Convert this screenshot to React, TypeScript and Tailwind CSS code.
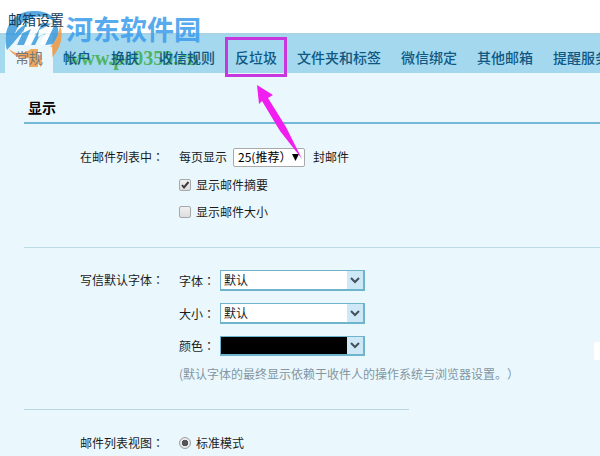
import type { ReactNode } from "react";

const tabs = ["常规", "帐户", "换肤", "收信规则", "反垃圾", "文件夹和标签", "微信绑定", "其他邮箱", "提醒服务"];

function SiteLogo() {
  return (
    <div className="pointer-events-none absolute top-2 left-1 z-10 flex opacity-85" aria-hidden="true">
      <svg width="62" height="62" viewBox="0 0 62 62">
        <path d="M3 42C-3 22 9 3 29 3C43 2 52 9 55 18C48 10 40 7 31 9C17 11 9 23 10 34Z" fill="#3d9bdc" />
        <path d="M5 38C8 28 14 20 22 16L35 12L23 37H13L20 22L10 34Z" fill="#3d9bdc" />
        <path d="M27 37L38 15L52 16C56 22 55 30 50 36L41 37L48 21L35 29L31 37Z" fill="#3d9bdc" />
        <path d="M22 16L33 11H38L26 37H20L27 21L19 25Z" fill="#ffffff" />
        <path d="M35 22L47 16H51L41 37H35L42 25L34 29Z" fill="#ffffff" />
        <path d="M56 18C61 29 55 49 36 59L35 48C47 41 54 31 56 18Z" fill="#f19a45" />
        <path d="M5 41C12 47 20 46 27 41H34V59H25V50C17 51 9 48 5 41Z" fill="#f19a45" />
        <path d="M37 39H48L49 62H38Z" fill="#eaf8fe" />
      </svg>
      <div className="whitespace-nowrap">
        <div className="text-[27px] leading-[42px] font-bold text-[#3c9cec]">河东软件园</div>
        <div className="font-['Liberation_Serif',serif] text-xl leading-4 font-bold text-[#3fae4c]">www.pc0359.cn</div>
      </div>
    </div>
  );
}

function Colon() {
  return <span className="font-['Noto_Sans_CJK_TC',sans-serif]">：</span>;
}

function Setting({ label, children }: { label: string; children: ReactNode }) {
  return (
    <div className="flex">
      <div className="w-[155px] shrink-0 pl-14 leading-5">{label}<Colon /></div>
      <div className="min-w-0 flex-1">{children}</div>
    </div>
  );
}

function FontSelect({ id, label, black = false }: { id: string; label: string; black?: boolean }) {
  return (
    <div className="flex items-center">
      <label htmlFor={id} className="w-[41px] whitespace-nowrap">{label}<Colon /></label>
      <div className="relative">
        <select
          id={id}
          className={
            black
              ? "block h-5 w-[145px] appearance-none border border-r-2 border-b-2 border-[#6eb5cc] bg-black px-1 text-black"
              : "block h-[21px] w-[145px] appearance-none border border-r-2 border-b-2 border-[#6eb5cc] bg-white px-[3px] leading-4"
          }
        >
          <option>{black ? "" : "默认"}</option>
        </select>
        <span className="pointer-events-none absolute top-px right-0.5 bottom-0.5 flex w-4 items-center justify-center bg-[#cfe8f8]">
          <svg width="10" height="7" viewBox="0 0 10 7" fill="none" stroke="#43515e" strokeWidth="2">
            <path d="M1 1L5 5L9 1" />
          </svg>
        </span>
      </div>
    </div>
  );
}

function Tick({ label, checked = false }: { label: string; checked?: boolean }) {
  return (
    <label className="flex h-5 items-center gap-[5px]">
      <span className="relative flex">
        <input
          type="checkbox"
          defaultChecked={checked}
          className="peer size-3 appearance-none rounded-xs border border-[#a5a9ab] bg-linear-to-b from-[#f0f0f0] to-[#dddddd]"
        />
        <svg className="pointer-events-none absolute inset-0 hidden peer-checked:block" width="12" height="12" viewBox="0 0 12 12" fill="none" stroke="#3c3c3c" strokeWidth="2">
          <path d="M3 6L5 8.5L9.5 3" />
        </svg>
      </span>
      {label}
    </label>
  );
}

export default function App() {
  return (
    <div className="relative min-h-screen overflow-hidden bg-[#eaf8fe] font-['Noto_Sans_CJK_SC',sans-serif] text-xs text-[#1b1b1b] [text-spacing-trim:space-all]">
      <header className="h-[33px] bg-white pt-[7px] pl-2">
        <h1 className="relative z-20 text-sm leading-6 text-[#133d5e]">邮箱设置</h1>
      </header>
      <nav className="flex h-10 border-t-2 border-[#a8d4e4] bg-[#a3d8ef] pl-[5px]">
        {tabs.map((tab, i) => (
          <a
            key={tab}
            href="#"
            className={
              i === 0
                ? "shrink-0 bg-[#eaf8fe] px-2.5 pt-1 text-sm leading-9 text-[#777777]"
                : "relative shrink-0 px-2.5 pt-1 text-sm leading-9 font-medium text-[#0f5883]"
            }
          >
            <span className="relative z-20">{tab}</span>
            {tab === "反垃圾" && (
              <span className="absolute top-0.5 right-0 left-0 h-10 border-3 border-[#c837dd]" />
            )}
          </a>
        ))}
      </nav>

      <main className="pl-6">
        <h2 className="border-b-2 border-[#76b7d9] pt-[23px] pb-1 pl-1 text-sm leading-[22px] font-bold text-black">显示</h2>

        <form>
          <section className="border-b border-[#bddbe7] pt-[23px] pb-[25px]">
            <Setting label="在邮件列表中">
              <div className="flex h-5 items-center">
                <label htmlFor="page-size" className="mr-1.5">每页显示</label>
                <span className="relative">
                  <select id="page-size" className="block h-[19px] w-[72px] appearance-none rounded-xs border border-[#a9a9a9] bg-white pl-1 leading-4 text-black">
                    <option>25(推荐）</option>
                  </select>
                  <svg className="pointer-events-none absolute top-1.5 right-1.5" width="7" height="7" viewBox="0 0 7 7">
                    <path d="M0 0H7L3.5 7Z" fill="#000" />
                  </svg>
                </span>
                <span className="ml-2">封邮件</span>
              </div>
              <div className="mt-2 flex flex-col gap-[7px]">
                <Tick label="显示邮件摘要" checked />
                <Tick label="显示邮件大小" />
              </div>
            </Setting>
          </section>

          <section className="pt-[22px]">
            <Setting label="写信默认字体">
              <div className="flex flex-col gap-3">
                <FontSelect id="font" label="字体" />
                <FontSelect id="size" label="大小" />
                <FontSelect id="color" label="颜色" black />
              </div>
              <p className="mt-2 leading-5 whitespace-nowrap text-[#8495a0]">(默认字体的最终显示依赖于收件人的操作系统与浏览器设置。）</p>
            </Setting>
          </section>

          <section className="pt-[25px]">
            <hr className="w-[385px] max-w-full border-[#b9d6e1]" />
            <div className="pt-[23px]">
              <Setting label="邮件列表视图">
                <label className="flex h-5 items-center gap-[5px]">
                  <input
                    type="radio"
                    name="view"
                    defaultChecked
                    className="size-3 appearance-none rounded-full border border-[#9c9fa1] bg-[radial-gradient(circle,#555_0_3px,#e8e8e8_3px)]"
                  />
                  标准模式
                </label>
              </Setting>
            </div>
          </section>
        </form>
      </main>

      <svg className="pointer-events-none absolute top-[84px] left-[256px]" width="48" height="76" viewBox="0 0 48 76" aria-hidden="true">
        <path d="M1 1L17 11L12 14L30 43L46 75L24 47L6 17L3 20Z" fill="#f01ff0" />
      </svg>
      <span className="pointer-events-none absolute top-[342px] right-0 h-[18px] w-1.5 rounded-l-xs bg-white" />
      <SiteLogo />
    </div>
  );
}
